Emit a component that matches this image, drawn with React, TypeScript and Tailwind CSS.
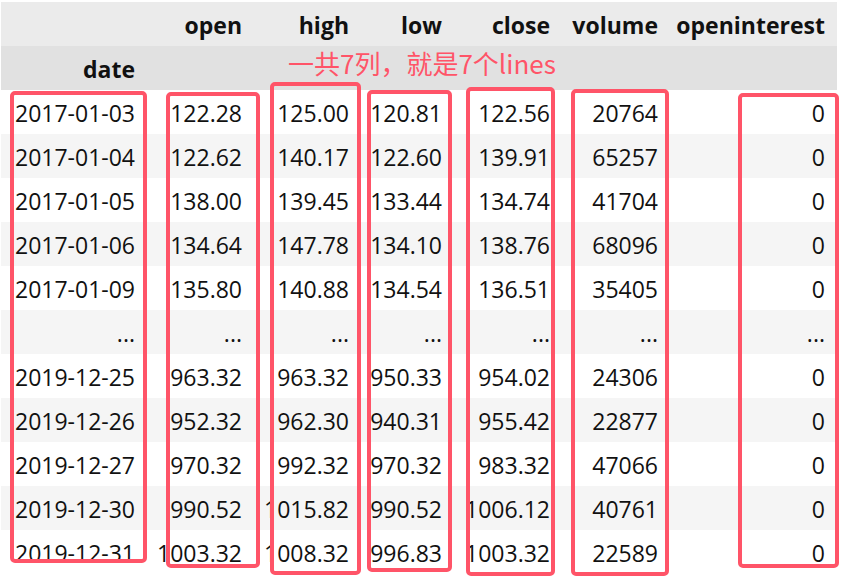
import React from 'react';

const cols = [
    { key: 'date', w: 'w-[146px]' },
    { key: 'open', w: 'w-[107px]' },
    { key: 'high', w: 'w-[107px]' },
    { key: 'low', w: 'w-[93px]' },
    { key: 'close', w: 'w-[108px]' },
    { key: 'volume', w: 'w-[108px]' },
    { key: 'openinterest', w: 'w-[167px]' },
];

const rows: string[][] = [
    ['2017-01-03', '122.28', '125.00', '120.81', '122.56', '20764', '0'],
    ['2017-01-04', '122.62', '140.17', '122.60', '139.91', '65257', '0'],
    ['2017-01-05', '138.00', '139.45', '133.44', '134.74', '41704', '0'],
    ['2017-01-06', '134.64', '147.78', '134.10', '138.76', '68096', '0'],
    ['2017-01-09', '135.80', '140.88', '134.54', '136.51', '35405', '0'],
    ['...', '...', '...', '...', '...', '...', '...'],
    ['2019-12-25', '963.32', '963.32', '950.33', '954.02', '24306', '0'],
    ['2019-12-26', '952.32', '962.30', '940.31', '955.42', '22877', '0'],
    ['2019-12-27', '970.32', '992.32', '970.32', '983.32', '47066', '0'],
    ['2019-12-30', '990.52', '1015.82', '990.52', '1006.12', '40761', '0'],
    ['2019-12-31', '1003.32', '1008.32', '996.83', '1003.32', '22589', '0'],
];

// red marker boxes drawn over the table: [left, top, width, height]
const marks: [number, number, number, number][] = [
    [10, 91, 137, 472],
    [166, 92, 94, 476],
    [270, 82, 91, 493],
    [367, 90, 85, 482],
    [466, 87, 89, 489],
    [571, 89, 98, 487],
    [738, 93, 101, 475],
];

export default function App() {
    return (
        <div className="relative h-[582px] w-[855px] overflow-hidden bg-white pt-[2px] pl-px text-[23px] text-[#111] [font-family:'Open_Sans','Noto_Sans_CJK_SC',sans-serif]">
            <div className="flex h-[44px] w-[836px] items-center bg-[#ebebeb] pt-[3px] font-bold">
                {cols.map((c, i) => (
                    <div key={c.key} className={`${c.w} pr-3 text-right`}>{i === 0 ? '' : c.key}</div>
                ))}
            </div>
            <div className="flex h-[44px] w-[836px] items-center bg-[#e1e1e1] pt-[3px] font-bold">
                <div className="w-[146px] pr-3 text-right">date</div>
            </div>
            {rows.map((r, ri) => (
                <div key={ri} className={`flex h-[44px] w-[836px] items-center pt-[2px] ${ri % 2 === 1 ? 'bg-[#f5f5f5]' : 'bg-white'}`}>
                    {r.map((v, ci) => (
                        <div key={ci} className={`${cols[ci].w} pr-3 text-right`}>{v}</div>
                    ))}
                </div>
            ))}

            <div className="absolute left-[288px] top-[46px] text-[26px] leading-[34px] text-[#ff5468] [font-family:'Noto_Sans_CJK_SC','Open_Sans',sans-serif]">一共7列，就是7个lines</div>
            {marks.map(([l, t, w, h], i) => (
                <div key={i} className="absolute rounded-[5px] border-4 border-[#ff5468]" style={{ left: l, top: t, width: w, height: h }} />
            ))}
        </div>
    );
}
